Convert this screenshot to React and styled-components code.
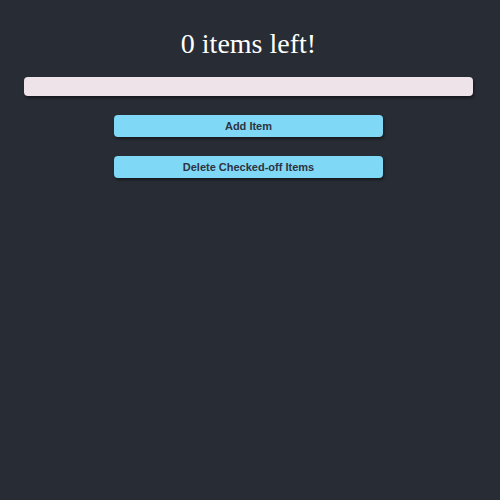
import React, { useState } from 'react';
import styled, { createGlobalStyle } from 'styled-components';

const GlobalStyle = createGlobalStyle`
  html, body {
    margin: 0;
    padding: 0;
    background: #282c34;
  }
  body {
    min-height: 500px;
  }
`;

const Page = styled.div`
  display: flex;
  flex-direction: column;
  align-items: center;
  padding: 0 27px 0 24px;
  min-height: 500px;
  box-sizing: border-box;
`;

const Title = styled.h1`
  font-family: 'Liberation Serif', 'Times New Roman', serif;
  font-weight: normal;
  font-size: 28px;
  color: #ffffff;
  margin: 28px 0 17px;
  line-height: 32px;
`;

const ItemInput = styled.input`
  width: 100%;
  height: 19px;
  box-sizing: border-box;
  background: #efe3ea;
  border: none;
  border-radius: 4px;
  box-shadow: 1px 2px 3px rgba(0, 0, 0, 0.45);
  outline: none;
  padding: 0 8px;
  font-family: 'Liberation Sans', Arial, sans-serif;
  font-size: 12px;
`;

const Button = styled.button`
  width: 60%;
  height: 22px;
  margin-top: 19px;
  padding: 0;
  background: #80d8f7;
  border: none;
  border-radius: 4px;
  box-shadow: 1px 2px 3px rgba(0, 0, 0, 0.45);
  color: #2e3340;
  font-family: 'Liberation Sans', Arial, sans-serif;
  font-weight: bold;
  font-size: 11px;
  cursor: pointer;
`;

export default function App() {
  const [text, setText] = useState('');
  return (
    <Page>
      <GlobalStyle />
      <Title>0 items left!</Title>
      <ItemInput value={text} onChange={(e) => setText(e.target.value)} />
      <Button>Add Item</Button>
      <Button>Delete Checked-off Items</Button>
    </Page>
  );
}
